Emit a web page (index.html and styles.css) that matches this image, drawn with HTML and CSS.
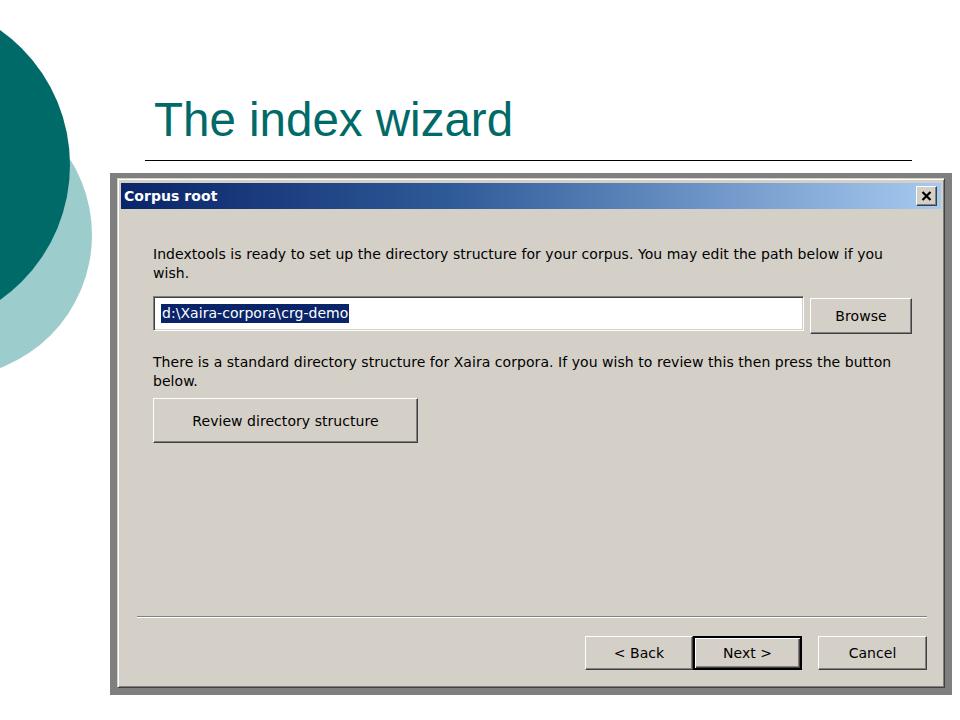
FILE: index.html
```html
<!DOCTYPE html>
<html lang="en">
<head>
    <meta charset="UTF-8">
    <title>The index wizard</title>
    <link rel="stylesheet" href="styles.css">
</head>
<body>
    <div class="slide">
        <!-- decorative circles on the left edge -->
        <div class="circle circle-light"></div>
        <div class="circle circle-dark"></div>

        <h1 class="slide-title">The index wizard</h1>
        <div class="slide-rule"></div>

        <div class="shot">
            <div class="window">
                <div class="titlebar">
                    <span class="titlebar-text">Corpus root</span>
                    <div class="close-btn">
                        <svg width="11" height="10" viewBox="0 0 11 10">
                            <path d="M1.5 1 L9.5 9 M9.5 1 L1.5 9" stroke="#000" stroke-width="2.2" fill="none"/>
                        </svg>
                    </div>
                </div>

                <div class="content">
                    <p class="msg msg-first">Indextools is ready to set up the directory structure for your corpus. You may edit the path below if you<br>wish.</p>

                    <div class="path-row">
                        <div class="field"><span class="sel">d:\Xaira-corpora\crg-demo</span></div>
                        <div class="btn btn-browse">Browse</div>
                    </div>

                    <p class="msg msg-second">There is a standard directory structure for Xaira corpora. If you wish to review this then press the button<br>below.</p>

                    <div class="btn btn-review">Review directory structure</div>

                    <div class="separator"></div>

                    <div class="footer">
                        <div class="btn btn-nav">&lt; Back</div>
                        <div class="btn btn-nav btn-default">Next &gt;</div>
                        <div class="btn btn-nav btn-cancel">Cancel</div>
                    </div>
                </div>
            </div>
        </div>
    </div>
</body>
</html>
```

FILE: styles.css
```css
body {
    margin: 0;
    background-color: #ffffff;
}
.slide {
    position: relative;
    width: 960px;
    height: 720px;
    overflow: hidden;
    background-color: #ffffff;
}
.circle {
    position: absolute;
    border-radius: 50%;
}
.circle-dark {
    left: -260px;
    top: 0;
    width: 330px;
    height: 330px;
    background-color: #006a68;
}
.circle-light {
    left: -192px;
    top: 93px;
    width: 284px;
    height: 284px;
    background-color: #9dcccd;
}
.slide-title {
    position: relative;
    margin: 0;
    padding: 92px 0 0 154px;
    font-family: "Liberation Sans", Arial, sans-serif;
    font-weight: normal;
    font-size: 47.5px;
    line-height: 56px;
    color: #006a68;
}
.slide-rule {
    margin: 12px 0 0 145px;
    width: 767px;
    height: 1px;
    background-color: #000000;
}
.shot {
    margin: 12px 0 0 110px;
    width: 842px;
    height: 522px;
    box-sizing: border-box;
    padding: 5px 7px 7px 7px;
    background-color: #7f7f7f;
}
.window {
    height: 100%;
    box-sizing: border-box;
    display: flex;
    flex-direction: column;
    padding: 4px 3px 3px 3px;
    background-color: #d4d0c8;
    border: 1px solid;
    border-color: #d4d0c8 #404040 #404040 #d4d0c8;
    box-shadow: inset 1px 1px #ffffff, inset -1px -1px #808080;
    font-family: "DejaVu Sans", Verdana, sans-serif;
    font-size: 14px;
    letter-spacing: 0.05px;
    color: #000000;
}
.titlebar {
    height: 26px;
    display: flex;
    align-items: center;
    justify-content: space-between;
    padding: 0 4px 0 3px;
    background: linear-gradient(to right, #0a246a 0%, #2f5a98 40%, #a6caf0 100%);
}
.titlebar-text {
    color: #ffffff;
    font-weight: bold;
    font-size: 14px;
}
.close-btn {
    width: 21px;
    height: 20px;
    box-sizing: border-box;
    display: flex;
    align-items: center;
    justify-content: center;
    background-color: #d4d0c8;
    border: 1px solid;
    border-color: #ffffff #404040 #404040 #ffffff;
    box-shadow: inset -1px -1px #808080;
}
.content {
    flex: 1;
    display: flex;
    flex-direction: column;
    padding: 0 14px 14px 16px;
}
.msg {
    margin: 0;
    padding: 0 13px 0 16px;
    line-height: 19px;
    white-space: nowrap;
}
.msg-first {
    margin-top: 36px;
}
.msg-second {
    margin-top: 19px;
}
.path-row {
    display: flex;
    align-items: flex-start;
    gap: 6px;
    margin: 13px 0 0 16px;
}
.field {
    width: 651px;
    height: 35px;
    box-sizing: border-box;
    display: flex;
    align-items: center;
    padding-left: 7px;
    background-color: #ffffff;
    border: 1px solid;
    border-color: #808080 #ffffff #ffffff #808080;
    box-shadow: inset 1px 1px #404040, inset -1px -1px #d4d0c8;
}
.sel {
    padding: 0 1px;
    line-height: 19px;
    background-color: #0a246a;
    color: #ffffff;
}
.btn {
    box-sizing: border-box;
    display: flex;
    align-items: center;
    justify-content: center;
    background-color: #d4d0c8;
    border: 1px solid;
    border-color: #ffffff #404040 #404040 #ffffff;
    box-shadow: inset -1px -1px #808080;
}
.btn-browse {
    width: 102px;
    height: 36px;
    margin-top: 2px;
}
.btn-review {
    width: 265px;
    height: 45px;
    margin: 7px 0 0 16px;
}
.separator {
    margin-top: auto;
    height: 1px;
    border-top: 1px solid #808080;
    background-color: #ffffff;
}
.footer {
    display: flex;
    justify-content: flex-end;
    margin-top: 18px;
}
.btn-nav {
    width: 108px;
    height: 34px;
}
.btn-default {
    width: 109px;
    border-width: 2px;
    border-color: #000000;
    box-shadow: inset 1px 1px #ffffff, inset -1px -1px #404040, inset -2px -2px #808080;
}
.btn-cancel {
    width: 109px;
    margin-left: 16px;
}
```
